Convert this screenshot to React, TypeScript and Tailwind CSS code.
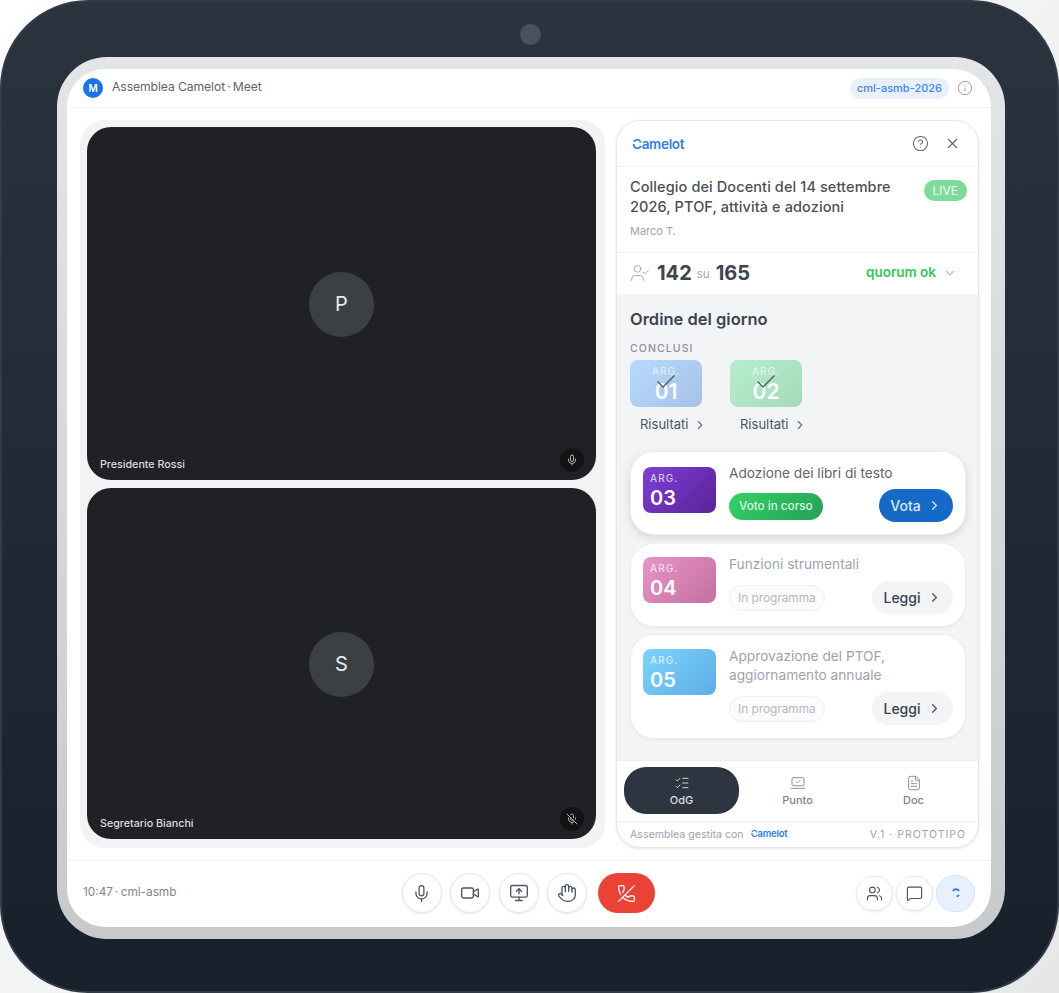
import { Mic, MicOff, Video, MonitorUp, Hand, PhoneOff, Users, MessageSquare, Info, CircleHelp, X, UserCheck, ChevronDown, ChevronRight, ListChecks, FileText, Check, LaptopMinimalCheck } from "lucide-react";

function Logo({ small }: { small?: boolean }) {
  return (
    <span className={small ? "relative text-[9.5px] font-semibold tracking-[-0.2px] text-[#2f80e4]" : "relative mt-[2px] text-[13.5px] font-semibold tracking-[-0.3px] text-[#2f80e4]"}>
      Camelot
      <span className={small ? "absolute left-0 top-[5px] h-[1px] w-[3px] bg-white" : "absolute left-0 top-[8px] h-[1.5px] w-[4px] bg-white"} />
    </span>
  );
}

function Tile({ letter, name, muted, cls }: { letter: string; name: string; muted?: boolean; cls: string }) {
  return (
    <div className={`relative flex items-center justify-center rounded-[24px] bg-[#202124] ${cls}`}>
      <div className="mt-[1px] flex h-[65px] w-[65px] items-center justify-center rounded-full bg-[#3c4043] text-[20px] text-[#e8eaed]">{letter}</div>
      <span className="absolute bottom-[7px] left-[13px] text-[10.7px] font-medium text-[#dcdde0]">{name}</span>
      <div className="absolute bottom-[8px] right-[12px] flex h-[24px] w-[24px] items-center justify-center rounded-full bg-[#121315]">
        {muted ? <MicOff size={12} className="text-[#a9abaf]" /> : <Mic size={12} className="text-[#a9abaf]" />}
      </div>
    </div>
  );
}

function Concluded({ n, cls }: { n: string; cls: string }) {
  return (
    <div className="flex w-[73px] flex-col">
      <div className={`relative flex h-[47px] w-[72px] flex-col items-center rounded-[8px] pt-[5px] text-white ${cls}`}>
        <span className="text-[10px] font-medium leading-[12px] tracking-[1px] opacity-60">ARG.</span>
        <span className="mt-[2px] text-[21px] font-semibold leading-[25px]">{n}</span>
        <Check size={24} strokeWidth={1.3} className="absolute left-[24px] top-[10px] text-[#4b5563]" />
      </div>
      <div className="mt-[9px] flex w-max items-center whitespace-nowrap pl-[10px] text-[13px] leading-[17px] text-[#4b5563]">
        Risultati <ChevronRight size={14} className="ml-[5px] shrink-0 text-[#6b7280]" />
      </div>
    </div>
  );
}

function Thumb({ n, cls, mt }: { n: string; cls: string; mt: string }) {
  return (
    <div className={`flex h-[46px] w-[73px] shrink-0 flex-col rounded-[8px] pl-[7px] pt-[5px] text-white ${cls} ${mt}`}>
      <span className="text-[10px] font-medium leading-[13px] tracking-[1.1px] opacity-70">ARG.</span>
      <span className="mt-[1px] text-[20px] font-semibold leading-[24px]">{n}</span>
    </div>
  );
}

function Item({ n, cls, title, pad }: { n: string; cls: string; title: React.ReactNode; pad: string }) {
  return (
    <div className={`flex gap-[13px] rounded-[24px] border border-[#eceef0] bg-white pl-[12px] pr-[12px] shadow-[0_1px_2px_rgba(0,0,0,0.05)] ${pad}`}>
      <Thumb n={n} cls={cls} mt="mt-[2px]" />
      <div className="flex flex-1 flex-col">
        <div className="text-[13.7px] leading-[19px] text-[#9ca3af]">{title}</div>
        <div className="mt-[7px] flex items-center justify-between">
          <span className="rounded-full border border-[#eef0f2] bg-[#fbfbfc] px-[8px] py-[4px] text-[11.8px] leading-[16px] text-[#b4b9c1]">In programma</span>
          <span className="flex h-[33px] w-[81px] items-center justify-center gap-[6px] rounded-full bg-[#f3f4f6] text-[14px] font-medium text-[#374151]">
            Leggi <ChevronRight size={15} className="text-[#4b5563]" />
          </span>
        </div>
      </div>
    </div>
  );
}

function Round({ children, w = "w-[40px]", cls = "h-[40px]" }: { children: React.ReactNode; w?: string; cls?: string }) {
  return (
    <div className={`flex items-center justify-center rounded-full border border-[#e5e7eb] bg-white text-[#4b5563] shadow-[0_1px_3px_rgba(0,0,0,0.08)] ${w} ${cls}`}>
      {children}
    </div>
  );
}

function Tab({ icon, label, active }: { icon: React.ReactNode; label: string; active?: boolean }) {
  return (
    <div className={active
      ? "flex h-[47px] flex-1 flex-col items-center justify-center gap-[2px] rounded-[22px] bg-[#2d3540] pt-[2px] text-[#d8dbe0]"
      : "flex h-[47px] flex-1 flex-col items-center justify-center gap-[2px] rounded-[22px] pt-[2px] text-[#7b828d]"}>
      {icon}
      <span className="text-[11px] font-medium leading-[15px]">{label}</span>
    </div>
  );
}

export default function App() {
  return (
    <div className="h-[993px] w-[1059px] overflow-hidden bg-[linear-gradient(135deg,#ffffff,#e6e7e9)] font-['Inter','Liberation_Sans',sans-serif]">
      <div className="relative flex h-full w-full flex-col items-center rounded-[88px] border-2 border-[#333b47] bg-[linear-gradient(180deg,#2b333f_0%,#18202b_100%)] pl-[55px] pr-[52px] pt-[55px]">
        <div className="absolute left-[518px] top-[22px] h-[21px] w-[21px] rounded-full bg-[#4a515c]" />
        <div className="h-[882px] w-full rounded-[50px] bg-[linear-gradient(180deg,#e3e5e9,#c8c9cd)] pb-[12px] pl-[10px] pr-[14px] pt-[12px]">
          <div className="flex h-full w-full flex-col overflow-hidden rounded-[38px] bg-white">
            <header className="flex h-[39px] shrink-0 items-center justify-between border-b border-[#f1f2f4] pl-[16px] pr-[18px]">
              <div className="flex items-center gap-[9px]">
                <div className="flex h-[20px] w-[20px] items-center justify-center rounded-full bg-[#1a73e8] text-[10px] font-semibold text-white">M</div>
                <span className="-mt-[2px] text-[12.2px] tracking-[-0.1px] text-[#5f6368]">Assemblea Camelot{"\u2009"}·{"\u2009"}Meet</span>
              </div>
              <div className="flex items-center gap-[8px]">
                <span className="rounded-full bg-[#e8f0fe] px-[7px] py-[2px] text-[11px] font-medium leading-[17px] text-[#4285e8]">cml-asmb-2026</span>
                <Info size={16} strokeWidth={1.5} className="text-[#9aa0a6]" />
              </div>
            </header>

            <div className="flex min-h-0 flex-1 gap-[11px] pb-[12px] pl-[13px] pr-[12px] pt-[12px]">
              <div className="flex w-[525px] flex-col gap-[8px] rounded-[24px] bg-[#f1f3f5] pb-[9px] pl-[7px] pr-[9px] pt-[7px]">
                <Tile cls="h-[353px] shrink-0" letter="P" name="Presidente Rossi" />
                <Tile cls="flex-1" letter="S" name="Segretario Bianchi" muted />
              </div>

              <div className="flex flex-1 flex-col overflow-hidden rounded-[24px] border border-[#e5e7eb] bg-white shadow-[0_1px_3px_rgba(0,0,0,0.1)]">
                <div className="flex h-[46px] shrink-0 items-center justify-between border-b border-[#f1f2f4] pl-[15px] pr-[17px]">
                  <Logo />
                  <div className="flex items-center gap-[15px]">
                    <CircleHelp size={17} strokeWidth={1.5} className="text-[#5f6368]" />
                    <X size={17} strokeWidth={1.6} className="text-[#5f6368]" />
                  </div>
                </div>
                <div className="flex h-[86px] shrink-0 flex-col border-b border-[#f1f2f4] pl-[13px] pr-[11px] pt-[10px]">
                  <div className="flex items-start justify-between">
                    <div className="w-[280px] text-[14.5px] font-medium leading-[20px] tracking-[0.1px] text-[#4a4f57]">Collegio dei Docenti del 14 settembre 2026, PTOF, attività e adozioni</div>
                    <span className="mt-[3px] rounded-full bg-[#7edc98] px-[9px] py-[1px] text-[12px] leading-[19px] text-[#edfbf1]">LIVE</span>
                  </div>
                  <div className="mt-[7px] text-[11px] leading-[14px] text-[#9ca3af]">Marco T.</div>
                </div>
                <div className="flex h-[41px] shrink-0 items-center justify-between pb-[2px] pl-[13px] pr-[21px]">
                  <div className="flex items-center">
                    <UserCheck size={20} strokeWidth={1.1} className="mr-[7px] text-[#9ca3af]" />
                    <span className="text-[20px] font-bold text-[#3c4450]">142</span>
                    <span className="ml-[5px] mr-[6px] mt-[5px] text-[11.5px] text-[#9ca3af]">su</span>
                    <span className="text-[20px] font-bold text-[#3c4450]">165</span>
                  </div>
                  <div className="flex items-center gap-[7px] text-[13.5px] font-semibold text-[#34c759]">
                    quorum ok <ChevronDown size={14} strokeWidth={1.6} />
                  </div>
                </div>
                <div className="flex min-h-0 flex-1 flex-col bg-[#f3f4f6] pl-[13px] pr-[12px] pt-[14px]">
                  <h2 className="text-[16.5px] font-semibold leading-[22px] text-[#3c4450]">Ordine del giorno</h2>
                  <div className="mt-[12px] text-[10.5px] font-medium leading-[14px] tracking-[1.1px] text-[#8b919b]">CONCLUSI</div>
                  <div className="mt-[4px] flex gap-[27px]">
                    <Concluded n="01" cls="bg-[linear-gradient(135deg,#b6daff,#a5c2e4)]" />
                    <Concluded n="02" cls="bg-[linear-gradient(135deg,#b5efca,#a6d9bb)]" />
                  </div>
                  <div className="mt-[18px] flex flex-col gap-[7px]">
                    <div className="mb-[1px] flex gap-[13px] rounded-[24px] border border-[#eceef0] bg-white pb-[12px] pl-[12px] pr-[12px] pt-[14px] shadow-[0_3px_8px_rgba(0,0,0,0.12)]">
                      <Thumb n="03" cls="bg-[linear-gradient(135deg,#7f3fd6,#5a2299)]" mt="mt-[1px]" />
                      <div className="flex flex-1 flex-col">
                        <div className="text-[13.7px] leading-[15px] text-[#5f6368]">Adozione dei libri di testo</div>
                        <div className="mt-[8px] flex items-center justify-between">
                          <span className="mt-[1px] rounded-full bg-[linear-gradient(135deg,#34d263,#25a058)] px-[10px] py-[5px] text-[11.7px] font-medium leading-[17px] text-[#dcf8e5]">Voto in corso</span>
                          <span className="flex h-[33px] w-[74px] items-center justify-center gap-[6px] rounded-full bg-[#1569c7] text-[14px] font-medium text-[#dbe9f9]">
                            Vota <ChevronRight size={15} />
                          </span>
                        </div>
                      </div>
                    </div>
                    <Item pad="pt-[11px] pb-[12px]" n="04" cls="bg-[linear-gradient(135deg,#e795c7,#c5709f)]" title="Funzioni strumentali" />
                    <Item pad="pt-[12px] pb-[13px]" n="05" cls="bg-[linear-gradient(135deg,#7dd3fc,#5dade6)]" title={<>Approvazione del PTOF,<br />aggiornamento annuale</>} />
                  </div>
                </div>
                <div className="flex h-[61px] shrink-0 items-center gap-[1px] border-t border-[#eceef0] px-[7px] pb-[1px]">
                  <Tab active label="OdG" icon={<ListChecks size={16} strokeWidth={1.4} />} />
                  <Tab label="Punto" icon={<LaptopMinimalCheck size={16} strokeWidth={1.3} />} />
                  <Tab label="Doc" icon={<FileText size={16} strokeWidth={1.3} />} />
                </div>
                <div className="flex h-[26px] shrink-0 items-center justify-between border-t border-[#eceef0] pl-[13px] pr-[12px]">
                  <div className="flex items-center gap-[7px] text-[10.6px] text-[#9ca3af]">
                    Assemblea gestita con <Logo small />
                  </div>
                  <span className="text-[10.5px] tracking-[1px] text-[#9ca3af]">V.1 · PROTOTIPO</span>
                </div>
              </div>
            </div>

            <footer className="flex h-[67px] shrink-0 items-center justify-between border-t border-[#f1f2f4] pb-[2px] pl-[16px] pr-[16px]">
              <span className="w-[198px] text-[11.8px] text-[#80868b]">10:47{"\u2009"}·{"\u2009"}cml-asmb</span>
              <div className="flex items-center gap-[8.5px]">
                <Round><Mic size={19} strokeWidth={1.6} /></Round>
                <Round><Video size={20} strokeWidth={1.6} /></Round>
                <Round><MonitorUp size={20} strokeWidth={1.6} /></Round>
                <Round><Hand size={20} strokeWidth={1.6} /></Round>
                <div className="ml-[2px] flex h-[40px] w-[57px] items-center justify-center rounded-full bg-[#ea4335] text-white">
                  <PhoneOff size={19} strokeWidth={1.6} />
                </div>
              </div>
              <div className="flex w-[200px] items-center justify-end gap-[3px]">
                <Round w="w-[37px]" cls="h-[35px]"><Users size={17} strokeWidth={1.6} /></Round>
                <Round w="w-[37px]" cls="h-[35px]"><MessageSquare size={17} strokeWidth={1.6} /></Round>
                <div className="flex h-[37px] w-[39px] items-center justify-center rounded-full border border-[#cfe1fb] bg-[#e8f0fe]">
                  <svg width="10" height="10" viewBox="0 0 10 10" fill="none" stroke="#2f80e4" strokeWidth="2"><path d="M8 3A3.5 3.5 0 0 0 2 3M8 7a3.2 3.2 0 0 1-2.5 1.3" /></svg>
                </div>
              </div>
            </footer>
          </div>
        </div>
      </div>
    </div>
  );
}
